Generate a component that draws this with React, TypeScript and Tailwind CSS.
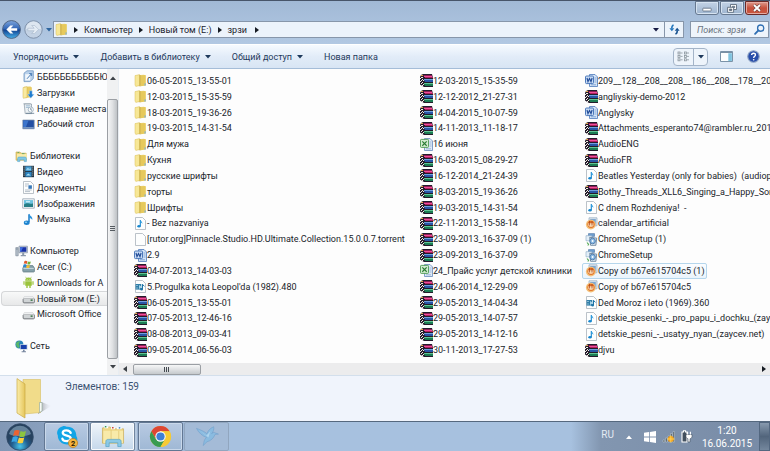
import type { ReactNode } from 'react';

type Kind = 'folder' | 'rar' | 'music' | 'video' | 'blank' | 'word' | 'excel' | 'image' | 'setup';
type Item = [Kind, string];

const columns: Item[][] = [
  [
    ['folder', '06-05-2015_13-55-01'],
    ['folder', '12-03-2015_15-35-59'],
    ['folder', '18-03-2015_19-36-26'],
    ['folder', '19-03-2015_14-31-54'],
    ['folder', 'Для мужа'],
    ['folder', 'Кухня'],
    ['folder', 'русские шрифты'],
    ['folder', 'торты'],
    ['folder', 'Шрифты'],
    ['music', '- Bez nazvaniya'],
    ['blank', '[rutor.org]Pinnacle.Studio.HD.Ultimate.Collection.15.0.0.7.torrent'],
    ['word', '2.9'],
    ['rar', '04-07-2013_14-03-03'],
    ['video', "5.Progulka kota Leopol'da (1982).480"],
    ['rar', '06-05-2015_13-55-01'],
    ['rar', '07-05-2013_12-46-16'],
    ['rar', '08-08-2013_09-03-41'],
    ['rar', '09-05-2014_06-56-03'],
  ],
  [
    ['rar', '12-03-2015_15-35-59'],
    ['rar', '12-12-2012_21-27-31'],
    ['rar', '14-04-2015_10-07-59'],
    ['rar', '14-11-2013_11-18-17'],
    ['excel', '16 июня'],
    ['rar', '16-03-2015_08-29-27'],
    ['rar', '16-12-2014_21-24-39'],
    ['rar', '18-03-2015_19-36-26'],
    ['rar', '19-03-2015_14-31-54'],
    ['rar', '22-11-2013_15-58-14'],
    ['rar', '23-09-2013_16-37-09 (1)'],
    ['rar', '23-09-2013_16-37-09'],
    ['excel', '24_Прайс услуг детской клиники'],
    ['rar', '24-06-2014_12-29-09'],
    ['rar', '29-05-2013_14-04-34'],
    ['rar', '29-05-2013_14-07-57'],
    ['rar', '29-05-2013_14-12-16'],
    ['rar', '30-11-2013_17-27-53'],
  ],
  [
    ['word', '209__128__208__208__186__208__178__208__1'],
    ['rar', 'angliyskiy-demo-2012'],
    ['word', 'Anglysky'],
    ['rar', 'Attachments_esperanto74@rambler.ru_2012'],
    ['rar', 'AudioENG'],
    ['rar', 'AudioFR'],
    ['music', 'Beatles Yesterday (only for babies)\u00a0 (audiop'],
    ['rar', 'Bothy_Threads_XLL6_Singing_a_Happy_Son'],
    ['music', 'C dnem Rozhdeniya!\u00a0 -'],
    ['image', 'calendar_artificial'],
    ['setup', 'ChromeSetup (1)'],
    ['setup', 'ChromeSetup'],
    ['image', 'Copy of b67e615704c5 (1)'],
    ['image', 'Copy of b67e615704c5'],
    ['video', 'Ded Moroz i leto (1969).360'],
    ['music', 'detskie_pesenki_-_pro_papu_i_dochku_(zayc'],
    ['music', 'detskie_pesni_-_usatyy_nyan_(zaycev.net)'],
    ['rar', 'djvu'],
  ],
];

const note = (
  <>
    <path d="M6.3 3v6" stroke="#1486cf" strokeWidth="1.1" />
    <path d="M6.4 2.6c.2 1.9 2.3 2 1.9 4.3-.5-1-1.2-1.3-1.9-1.4z" fill="#2d9de0" />
    <ellipse cx="5" cy="9.2" rx="1.7" ry="1.3" fill="#1486cf" />
  </>
);

const sheet = <path d="M1.5.5h7l3 3v9h-10z" fill="#fdfefe" stroke="#a9b2bb" strokeWidth=".8" />;

function FileIcon({ kind }: { kind: Kind }) {
  const art: Record<Kind, ReactNode> = {
    folder: (
      <>
        <path d="M3 1.2l7-.5 1.6 1v9.6L4 12z" fill="#f0d775" />
        <path d="M6.5 1.5L11.6 1v10.4l-5 .8z" fill="#e6c95c" />
        <path d="M1 1.6L5.6.6v11L1.8 12.4 1 11z" fill="#f7e796" stroke="#d9be58" strokeWidth=".5" />
        <path d="M6 1v11.5" stroke="#b99a35" strokeWidth=".7" />
        <path d="M10.4 9.4l1.4-.2v2.2l-1.4.3z" fill="#8fb4c2" />
      </>
    ),
    rar: (
      <>
        <path d="M1 1L3 0h9l1 4v9H4L0 10.5V3z" fill="#241c2c" />
        <path d="M3 1h9v1H4z" fill="#8d1d56" />
        <path d="M4 2h8v1H4z" fill="#ef4f98" />
        <path d="M5 3h8v1H5z" fill="#b01f60" />
        <path d="M4 5h9v1H4z" fill="#6f9fe0" />
        <path d="M4 6h9v2H5z" fill="#2856a6" />
        <path d="M4 9h9v1H4z" fill="#5fc694" />
        <path d="M4 10h9v2H5z" fill="#1c7d53" />
        <path d="M0 4h1v1H0zM2 5h1v1H2zM1 6h1v1H1zM3 6h1v1H3zM0 7h1v1H0zM2 8h1v1H2zM1 9h1v1H1zM3 10h1v1H3zM1 3h2v1H1zM2 11h1v1H2z" fill="#f3ece2" />
        <path d="M1 1h2v1H1z" fill="#e0a94c" />
      </>
    ),
    music: <>{sheet}{note}</>,
    video: (
      <>
        {sheet}
        <path d="M1.5 4h5.8v5.6H1.5z" fill="#317fa9" />
        <path d="M2.5 5h1v1h-1zm0 2.4h1v1h-1z" fill="#d9eef8" />
        <path d="M5 5l3 2-3 2z" fill="#a7d4e9" />
        <path d="M8.5 4.2v5M8.6 4.4l1.8 2" stroke="#1d74a7" strokeWidth="1" fill="none" />
        <circle cx="7.6" cy="9.3" r="1.3" fill="#1d74a7" />
      </>
    ),
    blank: sheet,
    word: (
      <>
        <path d="M4.5.5H10l2.5 2.5v9.5h-8z" fill="#d5e4f7" stroke="#5f87c2" strokeWidth=".9" />
        <path d="M9.5 4H11.500M9.500 6H11.500M9.500 8H11.500M6 10.8h5" stroke="#6f97cf" strokeWidth=".8" />
        <rect x=".5" y="2" width="8" height="7.6" rx="1" fill="#c9dcf5" stroke="#3d6db3" strokeWidth=".9" />
        <path d="M2 4l1 3.6L4.5 4.6 6 7.6 7.1 4" fill="none" stroke="#254f9a" strokeWidth="1.2" />
      </>
    ),
    excel: (
      <>
        <path d="M4.5.5H10l2.5 2.5v9.5h-8z" fill="#dfeaf8" stroke="#7595c2" strokeWidth=".9" />
        <path d="M9.500 4h2M9.500 6h2M9.500 8h2M6 10.8h5" stroke="#8aa9d0" strokeWidth=".8" />
        <rect x=".5" y="1.4" width="8" height="8" rx=".8" fill="#d3ecd0" stroke="#4c9a51" strokeWidth=".9" />
        <path d="M2.3 3.4l4.4 4.3M6.7 3.4L2.3 7.7" stroke="#2b7c35" strokeWidth="1.2" />
      </>
    ),
    image: (
      <>
        <path d="M4 .8h8v8H4z" fill="#dce8f2" stroke="#93a9bd" strokeWidth=".7" />
        <path d="M5.2 2h5.6v5.4H5.2z" fill="#7fa7d0" />
        <circle cx="5.8" cy="7.6" r="4.9" fill="#f4c078" />
        <circle cx="6" cy="7.3" r="3.6" fill="#e2752c" />
        <path d="M3.4 6.2h5v2.5c-.8 1.3-3.8 1.5-5 0z" fill="#fbe3bd" />
        <path d="M4.6 3.8v4.7M7 4.2v4.3" stroke="#a83f17" strokeWidth=".8" />
      </>
    ),
    setup: (
      <>
        <path d="M3.5.6h6v2.8h-6z" fill="#6f9fd0" stroke="#49719f" strokeWidth=".6" />
        <path d="M1 2.7h5.8v5.1H1z" fill="#e4eff8" stroke="#8aa7c2" strokeWidth=".6" />
        <path d="M4.7 4.3l7 .8-.8 7.2H5.6z" fill="#dfe9f2" stroke="#5c7690" strokeWidth=".8" />
        <circle cx="7.6" cy="8" r="2.8" fill="#8dbbe4" stroke="#3d6fa3" strokeWidth=".8" />
        <circle cx="7.6" cy="8" r=".9" fill="#fff" />
        <path d="M2 9.5l1.6 1.8L2.8 12.5" stroke="#55a955" strokeWidth="1.1" fill="none" />
      </>
    ),
  };
  return <svg viewBox="0 0 13 13" className="size-[13px] shrink-0" aria-hidden="true">{art[kind]}</svg>;
}

const drive = (
  <>
    <path d="M1 6.5l1.5-2h8.3L12.5 6.5v3.8L11.3 11H2L1 10.2z" fill="#a4a8ab" />
    <path d="M1.2 6.3l1.5-1.8h7.9l1.7 1.8z" fill="#eef0f1" />
    <path d="M1.3 6.8h10.8V10H2z" fill="#d0d4d6" />
    <path d="M8.6 7.4h2v1.5h-2z" fill="#3b7648" />
    <path d="M1 7v3.3l1 .7h9.3l1.2-.7V7" fill="none" stroke="#72777b" strokeWidth=".7" />
  </>
);

const screen = (
  <>
    <path d="M4 1.2h8.4v6.6H4z" fill="#cfd8e2" stroke="#7f8da0" strokeWidth=".7" />
    <path d="M5 2.2h6.4v4.6H5z" fill="#1832a8" />
    <path d="M5 2.2h3.2L6 6.8H5z" fill="#426fe0" />
    <path d="M7.2 7.8h2v2.3h1.7v1.2H5.7v-1.2h1.5z" fill="#8b99ac" />
  </>
);

type Side = { label: string; icon: ReactNode; root?: boolean; active?: boolean } | null;

const side: Side[] = [
  {
    label: 'БББББББББББЮ',
    icon: (
      <>
        <path d="M2 3.2L5 .8h6.3v7.8L8 11.6H2z" fill="#b8d0ea" stroke="#6f95c0" strokeWidth=".8" />
        <path d="M3.2 4.2h5v6.2h-5z" fill="#f2f7fc" />
        <path d="M5 8.8l4.4-5M7.2 3.5l2.5-.1-.1 2.6" stroke="#4c7fb8" strokeWidth="1" fill="none" />
      </>
    ),
  },
  {
    label: 'Загрузки',
    icon: (
      <>
        <path d="M2 .8L8.4.4l1.4 1v9.8L2.6 12z" fill="#e8cb62" />
        <path d="M1 1.6L5 .7v10.9l-3.6.7L1 11z" fill="#f9eaa0" stroke="#d5b74f" strokeWidth=".5" />
        <path d="M7.4 4.8h2.8v3.4h2l-3.4 4-3.4-4h2z" fill="#1f7cd0" stroke="#d4e8f8" strokeWidth=".4" />
      </>
    ),
  },
  {
    label: 'Недавние места',
    icon: (
      <>
        <path d="M1 1.3h7.5l1 1.6H2.4z" fill="#b4bfc8" />
        <path d="M2.2 2h7.3v9.6H3.2z" fill="#edf2f5" stroke="#8695a2" strokeWidth=".7" />
        <path d="M3.8 3.8h4.4M3.8 5.4H7" stroke="#8eb0cd" strokeWidth=".8" />
        <circle cx="8.8" cy="7.6" r="2.6" fill="#f9fcfd" stroke="#8da1b1" strokeWidth=".7" />
        <path d="M8.8 6v1.8l1.3.5M4 11.3h8.2" stroke="#5f788d" strokeWidth=".8" fill="none" />
      </>
    ),
  },
  {
    label: 'Рабочий стол',
    icon: (
      <>
        <path d="M.8 2h11.4v8.8H.8z" fill="#234fa3" stroke="#8798ac" strokeWidth=".7" />
        <path d="M1.3 2.4h5.2L4 9H1.3z" fill="#3c75cc" />
        <path d="M1.2 9h10.6v1.4H1.2z" fill="#7696c2" />
      </>
    ),
  },
  null,
  {
    label: 'Библиотеки',
    root: true,
    icon: (
      <>
        <path d="M1 2h4l1 1.2h5.2v7H1z" fill="#ead178" stroke="#c8a94c" strokeWidth=".6" />
        <path d="M2 4h9.8v5H2z" fill="#f8eba9" />
        <path d="M2.5 2.5h1.6M7 3.6h2.6" stroke="#65a765" strokeWidth=".9" />
        <path d="M2.6 11.6V8.4c0-1 .8-1.4 1.6-1.4h5.2c1.2 0 2 .4 2 1.4v3.2H9.2V9.8H4.8v1.8z" fill="#80c7e6" stroke="#499fc7" strokeWidth=".5" />
      </>
    ),
  },
  {
    label: 'Видео',
    icon: (
      <>
        <path d="M1 .8h11v11.4H1z" fill="#24333f" />
        <path d="M3.3 1.3h6.3v4.8H3.3z" fill="#489bd0" />
        <path d="M3.3 7h6.3v4.7H3.3z" fill="#2f84c0" />
        <path d="M4 4.8l2-2 1.2 1.4 1-1 1 1.6zM4 10.6l2.3-2 2.5 2z" fill="#a8e0f3" />
        <path d="M2.1 1.6v10M10.8 1.6v10" stroke="#c8d4dc" strokeWidth=".9" strokeDasharray="1 1" />
      </>
    ),
  },
  {
    label: 'Документы',
    icon: (
      <>
        {sheet}
        <path d="M3 3h4M3 5h2.6M3 9h6.8M3 10.6h5" stroke="#96a5b3" strokeWidth=".7" />
        <path d="M6.4 4.3h3.5v3.5H6.4z" fill="#3878b8" />
      </>
    ),
  },
  {
    label: 'Изображения',
    icon: (
      <>
        <path d="M.7 1.8h11.6v9.4H.7z" fill="#f5f8fa" stroke="#8d9ba7" strokeWidth=".7" />
        <path d="M2 3.1h9v6.8H2z" fill="#6cc2df" />
        <path d="M2 7.4c3-2.5 5-.3 9-.8v3.3H2z" fill="#267e86" />
        <path d="M4 4.8h4" stroke="#e9faff" strokeWidth="1" />
      </>
    ),
  },
  {
    label: 'Музыка',
    icon: (
      <>
        <path d="M7 1.2v8" stroke="#1a78c4" strokeWidth="1.5" />
        <path d="M7 .6c.4 2.6 4.2 2.8 3.2 6.5-.6-1.7-2-2-3.2-2.3z" fill="#2d94dc" />
        <ellipse cx="4.7" cy="9.8" rx="2.9" ry="2.2" fill="#1d83cf" />
        <ellipse cx="4" cy="9.2" rx="1.2" ry=".7" fill="#8ed0f5" />
      </>
    ),
  },
  null,
  {
    label: 'Компьютер',
    root: true,
    icon: (
      <>
        {screen}
        <path d="M.8 2.6h2.4v8.2H.8z" fill="#b8c2cc" stroke="#748292" strokeWidth=".6" />
        <path d="M1.2 4h1.5" stroke="#56697c" strokeWidth=".6" />
      </>
    ),
  },
  {
    label: 'Acer (C:)',
    icon: (
      <>
        <path d="M.8 8l2-2.4h8l1.6 2.4v3.6L11.6 12H1.6l-.8-.6z" fill="#86a2ab" stroke="#5b7580" strokeWidth=".7" />
        <path d="M1.4 8.4h10.4" stroke="#cfdfe4" strokeWidth=".9" />
        <path d="M2.4 1.2c1-.7 2-.6 3 0L4.7 4c-1-.6-2-.7-3 0z" fill="#e25a2b" />
        <path d="M5.9 1.4c1 .5 2 .5 3 0L8.1 4.2c-1 .5-2 .5-2.8 0z" fill="#72b13c" />
        <path d="M1.5 4.7c1-.6 2-.5 3 0l-.8 2.7c-1-.5-2-.5-2.9 0z" fill="#2b88d0" />
        <path d="M5 5c1 .5 2 .5 3 0l-.8 2.7c-1 .4-2 .4-3 0z" fill="#f4c030" />
      </>
    ),
  },
  {
    label: 'Downloads for A',
    icon: (
      <>
        <path d="M3.2 4.7a3.3 3.1 0 016.6 0zM3.2 5.2h6.6v4.6H3.2zM1.4 5.2h1.2v3.6H1.4zM10.4 5.2h1.2v3.6h-1.2zM4.3 9.5h1.4v2.6H4.3zM7.3 9.5h1.4v2.6H7.3z" fill="#9bc43d" />
        <path d="M4.4 2.2L3.6.8M8.6 2.2L9.4.8" stroke="#9bc43d" strokeWidth=".6" />
        <path d="M4.8 3.2h.7v.6h-.7zM7.5 3.2h.7v.6h-.7z" fill="#fff" />
      </>
    ),
  },
  { label: 'Новый том (E:)', icon: drive, active: true },
  { label: 'Microsoft Office', icon: drive },
  null,
  {
    label: 'Сеть',
    root: true,
    icon: (
      <>
        <circle cx="4.4" cy="4.6" r="4" fill="#2a84bb" />
        <path d="M1 3c2-2 3-2.2 4-1.4L3.8 4.2l1 2-1.6 2C1.6 7 .8 5 1 3z" fill="#58b56c" />
        <path d="M5 4.3h7.5v5.4H5z" fill="#c9d4e4" />
        <path d="M5.7 5h6v4h-6z" fill="#1840ac" />
        <path d="M8 9.7h1.6v1.6H11v1H6.6v-1H8z" fill="#7888a0" />
      </>
    ),
  },
];

function Down({ className = '' }: { className?: string }) {
  return (
    <svg viewBox="0 0 6 4" className={`h-1 w-1.5 shrink-0 ${className}`} aria-hidden="true">
      <path d="M0 0h6L3 3.6z" fill="currentColor" />
    </svg>
  );
}

function Right() {
  return (
    <svg viewBox="0 0 4 6" className="h-1.5 w-1 shrink-0 text-[#151a22]" aria-hidden="true">
      <path d="M0 0v6l4-3z" fill="currentColor" />
    </svg>
  );
}

function WindowControls() {
  const base = 'flex h-[14px] w-6 items-center justify-center rounded-b-[3px] border border-[#66788f] shadow-[inset_0_0_0_1px_#d6e3f1]';
  return (
    <div className="flex h-5 items-start justify-end gap-px pr-px">
      <button aria-label="Свернуть" className={`${base} bg-linear-to-b from-[#c3d3e6] to-[#9eb5cf]`}>
        <svg viewBox="0 0 10 8" className="h-2 w-2.5"><rect x=".8" y="4.2" width="8.4" height="2.8" rx=".6" fill="#fff" stroke="#59687b" strokeWidth=".8" /></svg>
      </button>
      <button aria-label="Свернуть в окно" className={`${base} bg-linear-to-b from-[#c3d3e6] to-[#9eb5cf]`}>
        <svg viewBox="0 0 10 9" className="h-[9px] w-2.5" fill="#fff" stroke="#4f5e70" strokeWidth=".8">
          <path d="M3.5.5h6v5h-6zM5.3 2.3h2.4v1.4H5.3z" fillRule="evenodd" />
          <path d="M.6 3.3h6v5h-6zM2.4 5.1h2.4v1.4H2.4z" fillRule="evenodd" />
        </svg>
      </button>
      <button aria-label="Закрыть" className="flex h-[14px] w-6 items-center justify-center rounded-b-[3px] border border-[#6b2a27] bg-linear-to-b from-[#dc9a8d] via-[#c7503c] to-[#c9573f] shadow-[inset_0_0_0_1px_#e6aaa0]">
        <svg viewBox="0 0 10 8" className="h-2 w-2.5">
          <path d="M2 1l6 6M8 1L2 7" stroke="#5d3936" strokeWidth="3" />
          <path d="M2 1l6 6M8 1L2 7" stroke="#fff" strokeWidth="1.9" />
        </svg>
      </button>
    </div>
  );
}

function AddressRow() {
  return (
    <div className="flex h-[17px] items-center pr-px">
      <div className="flex w-[53px] shrink-0 items-center gap-[3px] pl-0.5">
        <button aria-label="Назад" className="size-[19px] shrink-0">
          <svg viewBox="0 0 20 20" className="size-[19px]">
            <defs>
              <linearGradient id="back" x2="0" y2="1">
                <stop offset="0" stopColor="#7ea5dc" /><stop offset=".48" stopColor="#2d62b4" /><stop offset=".52" stopColor="#11408f" /><stop offset="1" stopColor="#46b2ea" />
              </linearGradient>
            </defs>
            <circle cx="10" cy="10" r="9.4" fill="url(#back)" stroke="#4d6180" strokeWidth="1" />
            <path d="M16 8.7H9.3l2.6-2.9H8.8L4.6 10l4.2 4.2h3.1l-2.6-2.9H16z" fill="#fff" />
          </svg>
        </button>
        <button aria-label="Вперёд" className="size-[19px] shrink-0">
          <svg viewBox="0 0 20 20" className="size-[19px]">
            <circle cx="10" cy="10" r="9.2" fill="#c3d2e4" stroke="#7d8fa8" strokeWidth="1" />
            <path d="M2 9.5a8 8 0 0116 0z" fill="#dde6f0" />
            <path d="M4 8.7h6.7L8.1 5.8h3.1l4.2 4.2-4.2 4.2H8.1l2.6-2.9H4z" fill="#e5edf5" stroke="#a5b5c8" strokeWidth=".6" />
          </svg>
        </button>
        <button aria-label="Журнал" className="text-[#2d659e]"><Down /></button>
      </div>
      <nav aria-label="Адрес" className="flex h-[17px] min-w-0 flex-1 items-center border border-[#8796aa] bg-[#ecf3fb] pl-px text-[#1b222c]">
        <FileIcon kind="folder" />
        <ol className="flex flex-1 items-center pl-[6px]">
          <li className="flex items-center gap-[6px]"><Right /><a href="#computer">Компьютер</a></li>
          <li className="flex items-center gap-[6px] pl-[6px]"><Right /><a href="#disk-e">Новый том (E:)</a></li>
          <li className="flex items-center gap-[6px] pl-[6px]"><Right /><a href="#folder">зрзи</a><span className="pl-[2px]"><Right /></span></li>
        </ol>
        <button aria-label="Предыдущие расположения" className="flex h-full w-4 items-center justify-center text-[#151a44]"><Down /></button>
      </nav>
      <button aria-label="Обновить" className="flex h-[17px] w-[19px] shrink-0 items-center justify-center border border-l-0 border-[#8796aa] bg-[#ecf3fb]">
        <svg viewBox="0 0 12 12" className="size-[11px]">
          <path d="M5 1c-1.8.6-2 2-2 4" fill="none" stroke="#2477bd" strokeWidth="1.7" />
          <path d="M.4 4.6h5.4L3.1 8z" fill="#2477bd" />
          <path d="M7 11c1.8-.6 2-2 2-4" fill="none" stroke="#16508f" strokeWidth="1.7" />
          <path d="M6.2 7.4h5.4L8.9 4z" fill="#16508f" />
        </svg>
      </button>
      <label className="ml-1.5 flex h-[17px] w-[79px] shrink-0 items-center border border-[#8796aa] bg-[#eef4fb] pr-[3px] pl-[6px]">
        <input aria-label="Поиск" placeholder="Поиск: зрзи" className="w-full min-w-0 flex-1 bg-transparent italic outline-none placeholder:text-[#6c7480]" />
        <svg viewBox="0 0 12 12" className="size-[11px] shrink-0" fill="none">
          <circle cx="7.3" cy="4.5" r="3.4" stroke="#2f6fb3" strokeWidth="1.4" />
          <path d="M4.8 7L1.2 10.8" stroke="#2f6fb3" strokeWidth="2" strokeLinecap="round" />
        </svg>
      </label>
    </div>
  );
}

function Toolbar() {
  return (
    <div className="mt-1.5 flex h-[25px] shrink-0 items-center border-t border-b border-t-white border-b-[#a5bdd8] bg-linear-to-b from-[#f6faff] via-[#e2ecf8] to-[#d8e5f4] pr-2.5 pl-[13px] text-[#1e395b]">
      <button className="flex items-center gap-[5px]">Упорядочить<Down /></button>
      <button className="ml-[21px] flex items-center gap-[5px]">Добавить в библиотеку<Down /></button>
      <button className="ml-[21px] flex items-center gap-[5px]">Общий доступ<Down /></button>
      <button className="ml-[21px]">Новая папка</button>
      <div className="ml-auto flex h-[18px] rounded-sm border border-[#a4b4c8] bg-[#eef4fb]">
        <button aria-label="Вид" className="flex w-[19px] items-center justify-center">
          <svg viewBox="0 0 13 11" className="h-[11px] w-[13px]" fill="#eef2f5" stroke="#8b969f" strokeWidth=".8">
            {[1, 4.4, 7.8].map((y) => (
              <g key={y}>
                <rect x="1" y={y} width="2" height="2" /><path d="M3.6 1h2" transform={`translate(0 ${y})`} />
                <rect x="7.4" y={y} width="2" height="2" /><path d="M10 1h2" transform={`translate(0 ${y})`} />
              </g>
            ))}
          </svg>
        </button>
        <button aria-label="Изменить вид" className="flex w-3.5 items-center justify-center border-l border-[#a4b4c8]"><Down /></button>
      </div>
      <button aria-label="Область просмотра" className="ml-3">
        <svg viewBox="0 0 13 11" className="h-[11px] w-[13px]">
          <path d="M.5.5h12v10H.5z" fill="#fdfefe" stroke="#7b93a8" />
          <path d="M8.3 2.2h3.6V10H8.3z" fill="#7fc3df" />
          <path d="M.5 1.5h12" stroke="#7b90a4" />
        </svg>
      </button>
      <button aria-label="Справка" className="ml-3.5">
        <svg viewBox="0 0 14 14" className="size-[13px]">
          <circle cx="7" cy="7" r="6.2" fill="#274da9" stroke="#8fa4c6" strokeWidth="1.2" />
          <path d="M5 5.5c0-2.8 4.2-2.6 4.1-.2C9 6.9 7.2 6.7 7.2 8.5" fill="none" stroke="#fff" strokeWidth="1.5" />
          <circle cx="7.2" cy="10.5" r=".9" fill="#fff" />
        </svg>
      </button>
    </div>
  );
}

function Sidebar() {
  return (
    <div className="flex w-[118px] shrink-0 bg-[#fcfdfe]">
      <nav aria-label="Папки" className="min-w-0 flex-1">
        <ul className="grid h-[285px] grid-rows-18">
          {side.map((s, i) => (
            <li key={i} className="min-h-0">
              {s && (
                <a
                  href={`#place-${i}`}
                  className={`flex h-full items-center gap-[2px] whitespace-nowrap ${s.root ? 'pl-[15px]' : s.active ? 'ml-px rounded-l-sm border border-r-0 border-[#d5d7d9] bg-linear-to-b from-[#f8f9f9] to-[#e7e8e9] pl-5' : 'pl-[22px]'}`}
                >
                  <svg viewBox="0 0 13 13" className="size-[13px] shrink-0" aria-hidden="true">{s.icon}</svg>
                  <span>{s.label}</span>
                </a>
              )}
            </li>
          ))}
        </ul>
      </nav>
      <div className="flex w-[11px] flex-col items-center bg-[#f0f1f2]">
        <div className="flex h-[30px] w-full justify-center pt-[7px]">
          <svg viewBox="0 0 6 4" className="h-1 w-1.5"><path d="M0 4h6L3 .4z" fill="#3c4146" /></svg>
        </div>
        <div className="flex w-[11px] flex-1 flex-col items-center rounded-xs border border-[#9b9fa4] bg-linear-to-r from-[#f4f5f6] via-[#dfe1e3] to-[#bec2c6] pt-[126px]">
          <svg viewBox="0 0 5 6" className="h-1.5 w-[5px]"><path d="M0 .5h5M0 2.5h5M0 4.5h5" stroke="#555b61" /></svg>
        </div>
        <div className="flex h-4 w-full items-center justify-center text-[#3c4146]"><Down /></div>
      </div>
    </div>
  );
}

function Files() {
  return (
    <main className="flex min-w-0 flex-1 flex-col border-l border-[#e8edf2] bg-[#fdfdfd]">
      <div className="grid flex-1 grid-cols-[286px_165px_minmax(0,1fr)] overflow-hidden pt-1 pl-3">
        {columns.map((col, c) => (
          <ul key={c} className="grid h-[285px] min-w-0 grid-rows-18">
            {col.map(([kind, name], i) => {
              const hot = c === 2 && i === 12;
              return (
                <li key={i} className="flex min-h-0 min-w-0">
                  <button
                    className={`flex items-center rounded-xs border pr-px pl-0.5 whitespace-nowrap ${hot ? 'border-[#b5d6ec] bg-linear-to-b from-[#fbfdff] to-[#eaf4fc]' : 'border-transparent'}`}
                  >
                    <FileIcon kind={kind} />
                    <span>{name}</span>
                  </button>
                </li>
              );
            })}
          </ul>
        ))}
      </div>
      <div className="flex h-3 shrink-0 items-center justify-between bg-[#ececed] pr-1 pl-1">
        <div className="flex items-center gap-[6px]">
          <svg viewBox="0 0 4 6" className="h-1.5 w-1"><path d="M4 0v6L0 3z" fill="#3c4146" /></svg>
          <div className="flex h-[11px] w-[68px] items-center justify-center rounded-xs border border-[#9b9fa4] bg-linear-to-b from-[#f6f7f7] via-[#dfe1e3] to-[#c5c9cc]">
            <svg viewBox="0 0 6 5" className="h-[5px] w-1.5"><path d="M.5 0v5M2.5 0v5M4.5 0v5" stroke="#444a50" /></svg>
          </div>
        </div>
        <Right />
      </div>
    </main>
  );
}

function Details() {
  return (
    <footer className="flex h-[46px] shrink-0 border-t border-[#d3dfec] bg-[#f0f4fc] pl-3.5">
      <svg viewBox="0 0 38 42" className="mt-0.5 h-[42px] w-[38px]" aria-hidden="true">
        <defs>
          <linearGradient id="flap"><stop offset="0" stopColor="#fbedaa" /><stop offset="1" stopColor="#e5c65c" /></linearGradient>
          <linearGradient id="shade"><stop offset="0" stopColor="#85868a" /><stop offset="1" stopColor="#dfe4ec" stopOpacity="0" /></linearGradient>
        </defs>
        <path d="M24 36l13.5-8-10-4z" fill="url(#shade)" />
        <path d="M9 1.5h17.5v33L10 36z" fill="#f1dc8a" stroke="#d7bd62" strokeWidth=".6" />
        <path d="M25.5 24.5H28V33l-2.5 1.5z" fill="#f8fbf7" stroke="#8ca596" strokeWidth=".6" />
        <path d="M3 .6L11 6v34l-8-5z" fill="url(#flap)" stroke="#c8a943" strokeWidth=".7" />
      </svg>
      <p className="pt-1 pl-[13px] text-[10px] leading-[13px] text-[#3b5272]">Элементов: 159</p>
    </footer>
  );
}

function Taskbar() {
  const cell = 'flex h-[29px] w-[45px] items-center justify-center rounded-xs border';
  return (
    <div className="flex h-[30px] shrink-0 items-stretch border-t border-[#55687e] bg-linear-to-r from-[#8298b6] via-[#a7c1df] via-30% to-[#a7c1df]">
      <button aria-label="Пуск" className="flex w-10 shrink-0 items-center justify-center">
        <svg viewBox="0 0 28 28" className="size-7">
          <defs>
            <radialGradient id="orb" cy=".85"><stop offset="0" stopColor="#48c4e9" /><stop offset=".6" stopColor="#235f91" /><stop offset="1" stopColor="#27425f" /></radialGradient>
          </defs>
          <circle cx="14" cy="14" r="13.3" fill="url(#orb)" stroke="#324b69" strokeWidth=".8" />
          <path d="M3 11a11.5 11.5 0 0122 0c-5 3-17 3-22 0z" fill="#a4c1d7" opacity=".5" />
          <path d="M8.5 7.6c2-1 3.7-.8 5.2 0l-1.400 5.400c-1.700-.9-3.300-.9-5.200 0z" fill="#ea6332" />
          <path d="M14.6 8c1.700.8 3.500.9 5.400 0l-1.400 5.500c-2 .9-3.600.7-5.400-.1z" fill="#8dc63f" />
          <path d="M6.8 14c2-.9 3.500-.8 5.200 0l-1.400 5.200c-1.700-.8-3.300-.8-5.200 0z" fill="#39a4e5" />
          <path d="M12.900 14.500c1.800.8 3.500.8 5.400 0l-1.400 5.200c-1.900.9-3.600.8-5.400 0z" fill="#fbd03b" />
        </svg>
      </button>
      <div className="ml-1 flex gap-px">
        <button aria-label="Skype" className={`${cell} border-[#627793] bg-linear-to-b from-[#b8cae2] to-[#9fb8d5] shadow-[inset_0_0_0_1px_#c9d8ea]`}>
          <svg viewBox="0 0 26 26" className="size-6">
            <path d="M8 1.5c2-.8 3.500-.2 4.600.5 6-.6 10.800 4 10.500 10 1.600 2.300 1.600 5-.4 7.500-2.400 2.300-5 2.400-7.400 1.300C8.500 22 3 17.500 3 11 1 7.500 3.600 2.500 8 1.500z" fill="#12a5e6" />
            <path d="M17 8.500C16 5 8.500 4.700 8.400 8.400c0 4 8.800 2.300 8.700 6.200-.1 3.800-8.300 3.600-9.100.2" fill="none" stroke="#fff" strokeWidth="2.500" strokeLinecap="round" />
            <circle cx="19.5" cy="19.5" r="5" fill="#f3b33c" stroke="#b9781a" strokeWidth=".7" />
            <text x="19.5" y="22.4" textAnchor="middle" fontSize="8" fontWeight="700" fill="#241804">2</text>
          </svg>
        </button>
        <button aria-label="Проводник" className={`${cell} mr-0.5 border-[#72869f] bg-linear-to-b from-[#f0f5fa] to-[#c5d8eb] shadow-[inset_0_0_0_1px_#f7fafd,2px_0_0_0_#b5c8de]`}>
          <svg viewBox="0 0 26 24" className="h-[23px] w-[26px]">
            <path d="M2 3l8-1 1.500 2H24v15H2z" fill="#eed785" stroke="#c7a953" strokeWidth=".7" />
            <path d="M4 2.500h4M11 3.500h4M17 3.500h5" stroke="#fff" strokeWidth="2" />
            <path d="M4.500 1.800h1.600" stroke="#2d9a53" strokeWidth="1.500" /><path d="M12 2.800h1.600" stroke="#cf4235" strokeWidth="1.500" /><path d="M19 3h1.600" stroke="#397ec4" strokeWidth="1.500" />
            <path d="M3 6h20.500v13H3z" fill="#f8eaa9" />
            <path d="M11 5v10M19 6v9" stroke="#dfc571" strokeWidth=".8" />
            <path d="M5.500 22.500v-5c0-1.800 1-2.500 2.500-2.500h11c1.800 0 2.500.7 2.500 2.500v5H18v-4H9v4z" fill="#8bc9e6" stroke="#529fc5" strokeWidth=".7" />
          </svg>
        </button>
        <button aria-label="Google Chrome" className={`${cell} border-[#627793] bg-linear-to-b from-[#b8cae2] to-[#9fb8d5] shadow-[inset_0_0_0_1px_#c9d8ea]`}>
          <svg viewBox="0 0 24 24" className="size-[23px]">
            <circle cx="12" cy="12" r="11" fill="#f6ca35" />
            <path d="M2.470 6.500A11 11 0 0121.530 6.500H12L7.240 14.750z" fill="#dc4634" />
            <path d="M2.470 6.500A11 11 0 0012 23l4.760-8.250H7.240z" fill="#389b51" />
            <path d="M21.530 6.500H12v5.500l4.760 2.750L12 23a11 11 0 009.530-16.500z" fill="#f6ca35" />
            <circle cx="12" cy="12" r="5.400" fill="#fff" /><circle cx="12" cy="12" r="4.300" fill="#3e7fd5" />
          </svg>
        </button>
        <button aria-label="Колибри" className={`${cell} border-[#91a6bf] bg-[#a4bbd7]`}>
          <svg viewBox="0 0 26 22" className="h-[21px] w-[26px]" fill="#8abbe0" stroke="#719fca" strokeWidth=".6">
            <path d="M2 2.500c4 1.500 8 3 11 5.500C14 4.500 17 2 20 .8c.5 2.700-.4 5.200-2 7.200.8-1.500 2.600-1.700 3.600-.7l3.400 1.200-3.600.3c-1.400 4-4.400 6.700-8.400 7.700L9 20.500l1-4.500c.3-1.500 1.200-3 2.500-4C8.500 10.500 4.500 7.500 2 2.500z" />
            <path d="M3.500 3.500l9 6.500 4-4.500-2 6.500z" fill="#afd4ed" stroke="none" />
          </svg>
        </button>
      </div>
      <div className="ml-auto flex items-center bg-linear-to-r from-transparent via-[#8296b0] via-15% to-[#788ba6] pl-[30px] text-white">
        <span className="pb-[3px] text-[10px] text-[#e4ebf3]">RU</span>
        <button aria-label="Показать скрытые значки" className="ml-3">
          <svg viewBox="0 0 6 4" className="h-1 w-1.5"><path d="M0 4h6L3 .4z" fill="#fff" /></svg>
        </button>
        <svg viewBox="0 0 12 12" className="ml-3 size-3" aria-hidden="true"><path d="M0 1.700L5.200 1v4.600H0zM6 .9L12 0v5.600H6zM0 6.400h5.200V11L0 10.300zM6 6.400h6V12l-6-.9z" fill="#fff" /></svg>
        <svg viewBox="0 0 13 12" className="ml-[6px] h-3 w-[13px]" aria-hidden="true">
          <path d="M1 9h1.700v2H1zM3.500 7h1.700v4H3.500zM6 5h1.700v6H6zM8.500 2.500h1.700V11H8.500zM11 .5h1.500V11H11z" fill="#505c65" stroke="#dce3e9" strokeWidth=".4" />
          <circle cx="8.800" cy="8" r="3" fill="#f5a31b" /><path d="M8.800 4.300v7.400M5.100 8h7.400" stroke="#ffd55e" strokeWidth=".9" />
        </svg>
        <svg viewBox="0 0 13 13" className="ml-[5px] size-[13px]" aria-hidden="true">
          <path d="M2 2h1.500V.8h2V2H7v10H2z" fill="#43505f" stroke="#fff" strokeWidth="1.100" />
          <path d="M6 4.500h6v2c0 1.300-1 2-2 2.200V12H8V8.700C6.800 8.400 6 7.700 6 6.500z" fill="#fff" stroke="#43505f" strokeWidth=".6" />
          <path d="M7.600 4.500V1.800M10.400 4.500V1.800" stroke="#fff" strokeWidth="1.100" />
        </svg>
        <div className="ml-1.5 flex w-14 flex-col items-center text-[10px] leading-[13px]">
          <time>1:20</time>
          <time>16.06.2015</time>
        </div>
        <button aria-label="Свернуть все окна" className="ml-1 h-full w-[11px] border border-[#536780] bg-linear-to-b from-[#8799ae] via-[#52657c] to-[#74879d]" />
      </div>
    </div>
  );
}

export default function App() {
  return (
    <div className="flex min-h-screen flex-col overflow-hidden border-t border-[#47556a] bg-[#b9d0ea] font-[Roboto,'Noto_Sans',sans-serif] text-[9px] leading-[12px] text-[#20242a]">
      <header className="bg-linear-to-b from-[#a1b9d6] to-[#bcd1ea]">
        <WindowControls />
        <AddressRow />
        <Toolbar />
      </header>
      <div className="flex min-h-0 flex-1">
        <Sidebar />
        <Files />
      </div>
      <Details />
      <Taskbar />
    </div>
  );
}
